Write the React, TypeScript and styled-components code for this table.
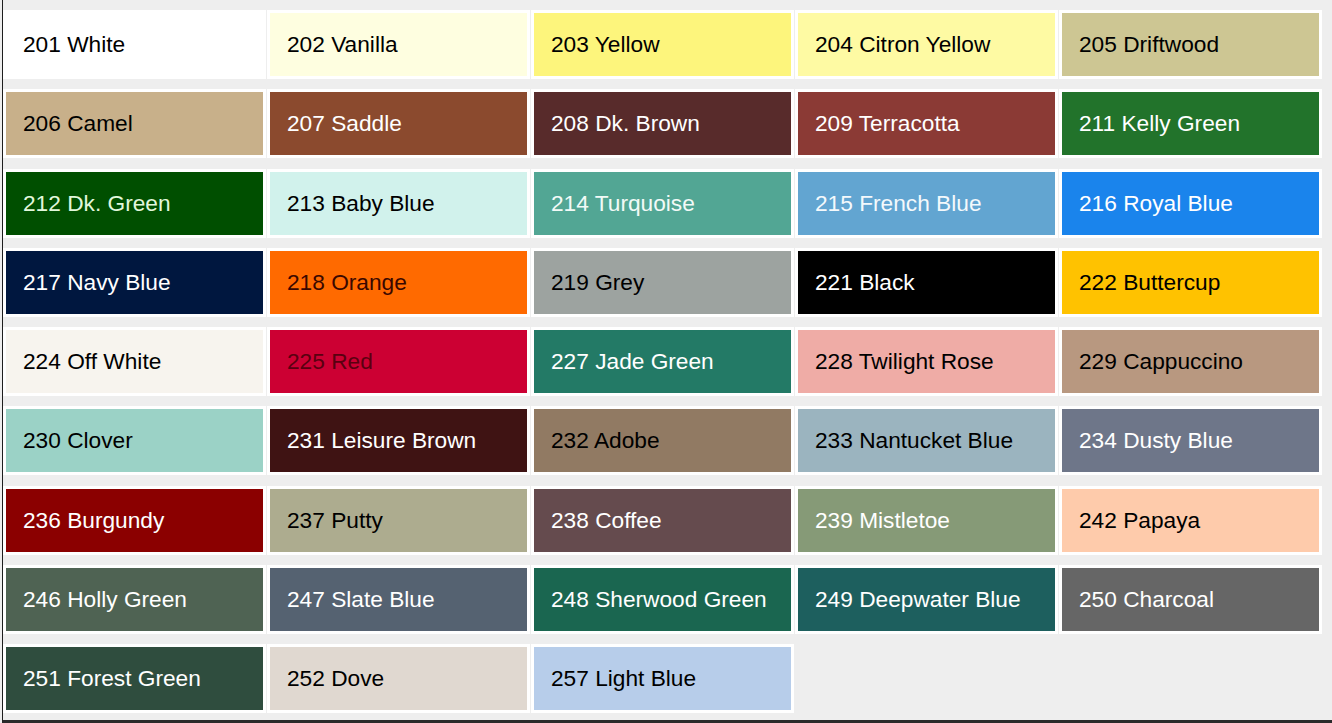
import React from "react";
import styled, { createGlobalStyle } from "styled-components";

interface Swatch {
  code: string;
  name: string;
  bg: string;
  fg: string;
}

const DARK = "#000000";
const LIGHT = "#ffffff";

const swatches: Swatch[] = [
  { code: "201", name: "White", bg: "#ffffff", fg: DARK },
  { code: "202", name: "Vanilla", bg: "#fefee0", fg: DARK },
  { code: "203", name: "Yellow", bg: "#fdf57c", fg: DARK },
  { code: "204", name: "Citron Yellow", bg: "#fefaa3", fg: DARK },
  { code: "205", name: "Driftwood", bg: "#cdc693", fg: DARK },
  { code: "206", name: "Camel", bg: "#c8b08a", fg: DARK },
  { code: "207", name: "Saddle", bg: "#8b4a2e", fg: LIGHT },
  { code: "208", name: "Dk. Brown", bg: "#582b2b", fg: LIGHT },
  { code: "209", name: "Terracotta", bg: "#8b3a35", fg: LIGHT },
  { code: "211", name: "Kelly Green", bg: "#22732b", fg: LIGHT },
  { code: "212", name: "Dk. Green", bg: "#004f00", fg: "#e2f8dc" },
  { code: "213", name: "Baby Blue", bg: "#d1f2ec", fg: DARK },
  { code: "214", name: "Turquoise", bg: "#52a694", fg: "#f2faf7" },
  { code: "215", name: "French Blue", bg: "#62a5d1", fg: "#f4f9fc" },
  { code: "216", name: "Royal Blue", bg: "#1a84ec", fg: LIGHT },
  { code: "217", name: "Navy Blue", bg: "#00173f", fg: LIGHT },
  { code: "218", name: "Orange", bg: "#ff6a00", fg: "#3a0800" },
  { code: "219", name: "Grey", bg: "#9da3a0", fg: DARK },
  { code: "221", name: "Black", bg: "#000000", fg: LIGHT },
  { code: "222", name: "Buttercup", bg: "#ffc200", fg: DARK },
  { code: "224", name: "Off White", bg: "#f7f4ee", fg: DARK },
  { code: "225", name: "Red", bg: "#cc0033", fg: "#5a0010" },
  { code: "227", name: "Jade Green", bg: "#237a66", fg: LIGHT },
  { code: "228", name: "Twilight Rose", bg: "#efaca6", fg: DARK },
  { code: "229", name: "Cappuccino", bg: "#b89880", fg: DARK },
  { code: "230", name: "Clover", bg: "#9bd2c6", fg: DARK },
  { code: "231", name: "Leisure Brown", bg: "#3f1313", fg: LIGHT },
  { code: "232", name: "Adobe", bg: "#917a63", fg: DARK },
  { code: "233", name: "Nantucket Blue", bg: "#9bb4bf", fg: DARK },
  { code: "234", name: "Dusty Blue", bg: "#6e7689", fg: LIGHT },
  { code: "236", name: "Burgundy", bg: "#8b0000", fg: LIGHT },
  { code: "237", name: "Putty", bg: "#adac8f", fg: DARK },
  { code: "238", name: "Coffee", bg: "#654b4e", fg: LIGHT },
  { code: "239", name: "Mistletoe", bg: "#869a77", fg: LIGHT },
  { code: "242", name: "Papaya", bg: "#fecbab", fg: DARK },
  { code: "246", name: "Holly Green", bg: "#4f6353", fg: LIGHT },
  { code: "247", name: "Slate Blue", bg: "#556271", fg: LIGHT },
  { code: "248", name: "Sherwood Green", bg: "#1a6650", fg: LIGHT },
  { code: "249", name: "Deepwater Blue", bg: "#1d5f5e", fg: LIGHT },
  { code: "250", name: "Charcoal", bg: "#666666", fg: LIGHT },
  { code: "251", name: "Forest Green", bg: "#2f4d3e", fg: LIGHT },
  { code: "252", name: "Dove", bg: "#e0d8d0", fg: DARK },
  { code: "257", name: "Light Blue", bg: "#b7cdea", fg: DARK },
];

const GlobalStyle = createGlobalStyle`
  html, body {
    margin: 0;
    padding: 0;
    background: #eeeeee;
    overflow: hidden;
  }
`;

export default function App() {
  return (
    <>
      <GlobalStyle />
      <Frame>
        <Chart>
          {swatches.map((s) => (
            <Cell key={s.code}>
              <Chip $bg={s.bg} $fg={s.fg}>
                {s.code} {s.name}
              </Chip>
            </Cell>
          ))}
        </Chart>
      </Frame>
    </>
  );
}

const Frame = styled.div`
  box-sizing: border-box;
  height: 723px;
  margin-left: 2px;
  padding-top: 10px;
  border-left: 1px solid #1e1e1e;
  border-bottom: 3px solid #2a2a2a;
`;

const Chart = styled.div`
  display: grid;
  grid-template-columns: repeat(5, 263px);
  grid-auto-rows: 69px;
  column-gap: 1px;
  row-gap: 10.25px;
`;

const Cell = styled.div`
  background: #ffffff;
  padding: 3px;
  box-sizing: border-box;
  display: flex;
`;

const Chip = styled.div<{ $bg: string; $fg: string }>`
  flex: 1;
  display: flex;
  align-items: center;
  padding-left: 17px;
  background: ${(p) => p.$bg};
  color: ${(p) => p.$fg};
  font-family: "Liberation Sans", Arial, sans-serif;
  font-size: 22.7px;
  white-space: nowrap;
`;
